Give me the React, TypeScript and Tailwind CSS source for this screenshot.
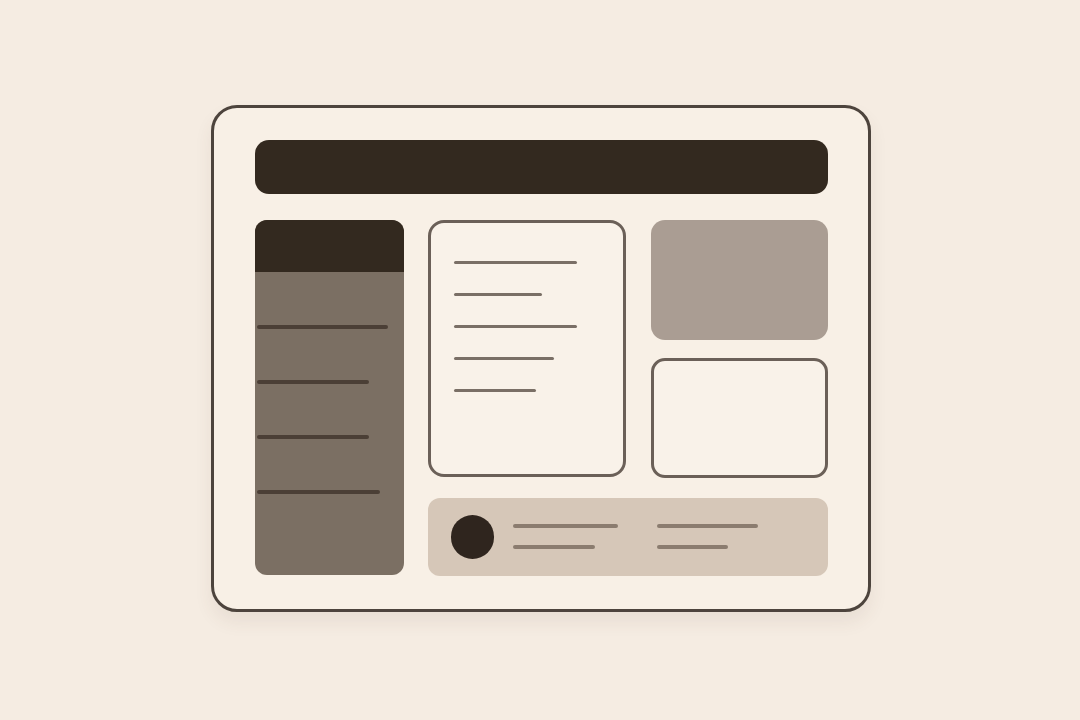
export default function App() {
  return (
    <div className="flex h-screen w-full items-center justify-center bg-[#f5ece2] pb-[4px] pl-[2px]">
      <div className="w-[660px] rounded-[26px] border-[3px] border-[#4d443d] bg-[#f8f0e6] pl-[41px] pr-[40px] pt-[32px] pb-[33px] shadow-[0_10px_18px_rgba(90,70,50,0.08)]">
        {/* header bar */}
        <div className="h-[54px] w-[573px] rounded-[14px] bg-[#33291f]" />

        <div className="mt-[26px] flex gap-[24px]">
          {/* sidebar */}
          <div className="flex h-[355px] w-[149px] flex-col overflow-hidden rounded-[12px] bg-[#7b6f63]">
            <div className="h-[52px] bg-[#33291f]" />
            <div className="flex flex-col gap-[51px] pl-[2px] pt-[53px]">
              <div className="h-[4px] w-[131px] rounded-full bg-[#4b3f36]" />
              <div className="h-[4px] w-[112px] rounded-full bg-[#4b3f36]" />
              <div className="h-[4px] w-[112px] rounded-full bg-[#4b3f36]" />
              <div className="h-[4px] w-[123px] rounded-full bg-[#4b3f36]" />
            </div>
          </div>

          <div className="flex w-[400px] flex-col gap-[20px]">
            <div className="flex gap-[25px]">
              {/* document card */}
              <div className="flex h-[257px] w-[198px] flex-col gap-[29px] rounded-[16px] border-[3px] border-[#6b6058] bg-[#f9f2e9] pl-[23px] pt-[38px]">
                <div className="h-[3px] w-[123px] rounded-full bg-[#7a6f66]" />
                <div className="h-[3px] w-[88px] rounded-full bg-[#7a6f66]" />
                <div className="h-[3px] w-[123px] rounded-full bg-[#7a6f66]" />
                <div className="h-[3px] w-[100px] rounded-full bg-[#7a6f66]" />
                <div className="h-[3px] w-[82px] rounded-full bg-[#7a6f66]" />
              </div>

              <div className="flex w-[177px] flex-col gap-[18px]">
                <div className="h-[120px] rounded-[14px] bg-[#aa9d93]" />
                <div className="h-[120px] rounded-[14px] border-[3px] border-[#6b6058] bg-[#f9f2e9]" />
              </div>
            </div>

            {/* footer bar */}
            <div className="flex h-[78px] w-[400px] items-center rounded-[12px] bg-[#d6c7b8] pl-[23px]">
              <div className="h-[44px] w-[43px] rounded-full bg-[#2f251e]" />
              <div className="ml-[19px] flex w-[144px] flex-col gap-[17px]">
                <div className="h-[4px] w-[105px] rounded-full bg-[#8b7c6f]" />
                <div className="h-[4px] w-[82px] rounded-full bg-[#8b7c6f]" />
              </div>
              <div className="flex flex-col gap-[17px]">
                <div className="h-[4px] w-[101px] rounded-full bg-[#8b7c6f]" />
                <div className="h-[4px] w-[71px] rounded-full bg-[#8b7c6f]" />
              </div>
            </div>
          </div>
        </div>
      </div>
    </div>
  );
}
